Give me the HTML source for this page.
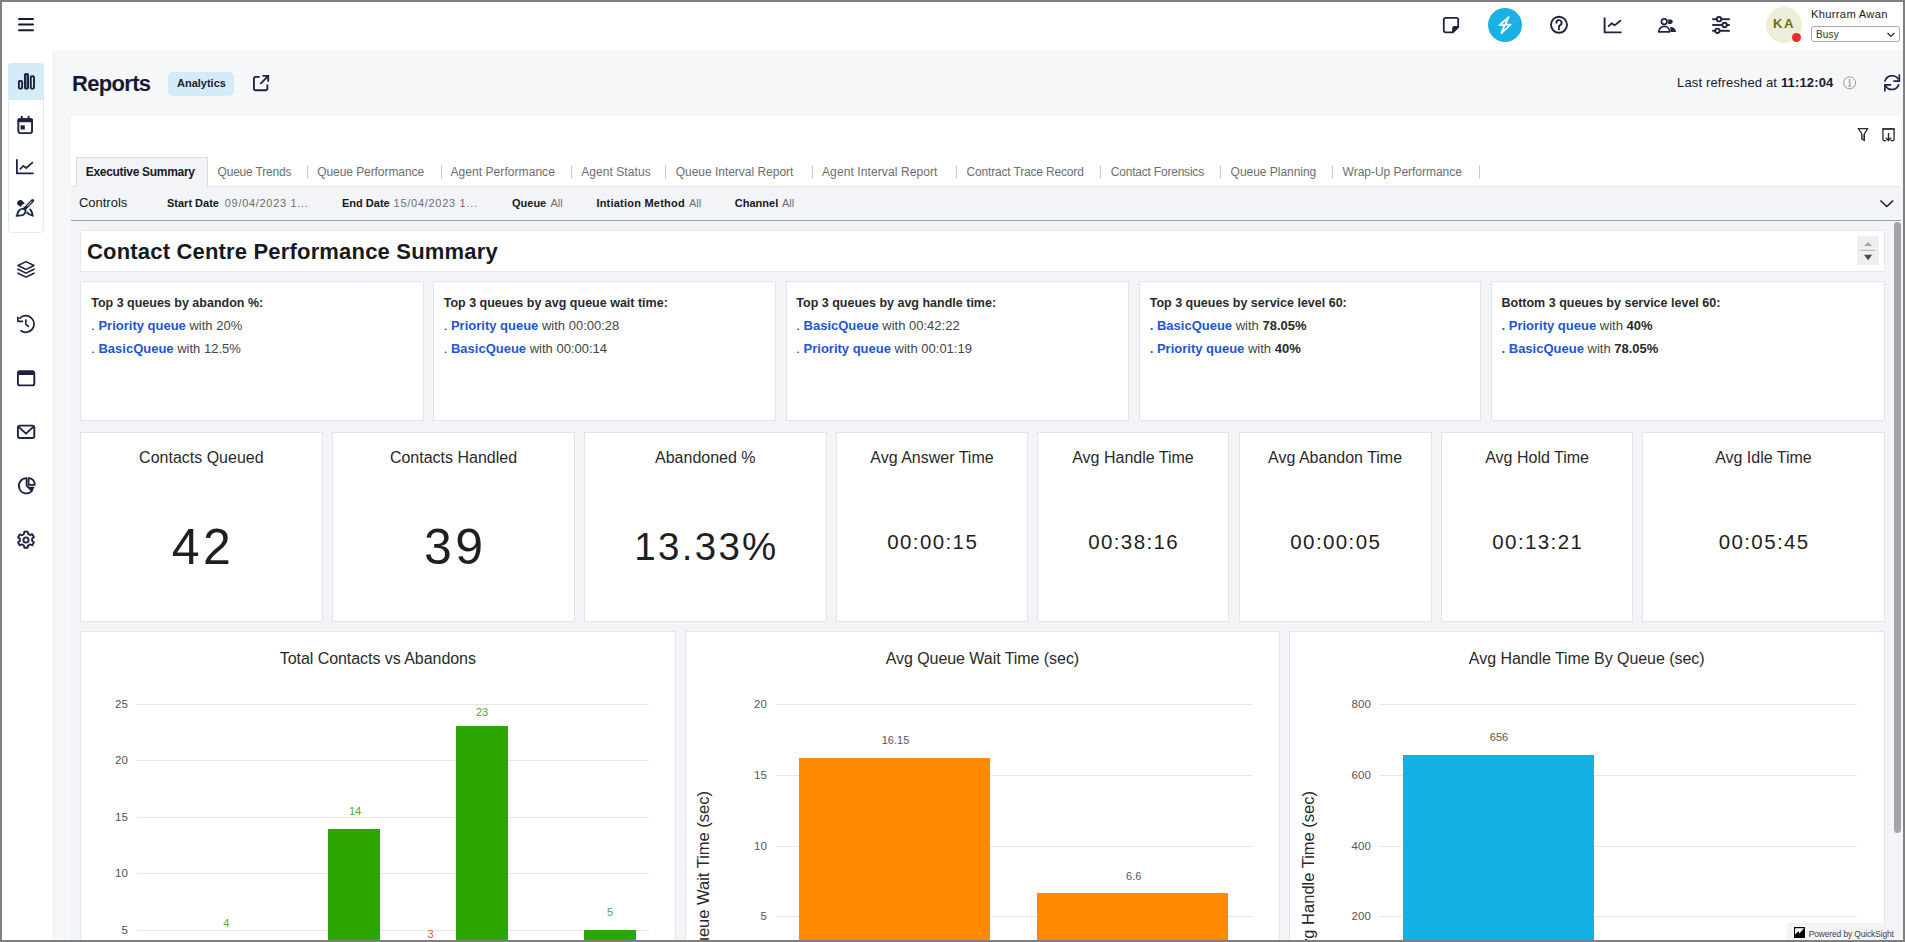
<!DOCTYPE html>
<html><head><meta charset="utf-8">
<style>
*{box-sizing:border-box;margin:0;padding:0}
html,body{width:1905px;height:942px;overflow:hidden;background:#7f7f7f;font-family:"Liberation Sans",sans-serif}
.a{position:absolute}
.t{position:absolute;white-space:nowrap;line-height:1}
svg{position:absolute;overflow:visible}
#app{position:absolute;left:2px;top:2px;width:1901px;height:938.5px;background:#fff;overflow:hidden}
</style></head><body>
<div id="app"></div>
<!-- main bg -->
<div class="a" style="left:53px;top:50px;width:1850px;height:890.5px;background:#f6f7f9"></div>
<!-- sidebar shadow line -->
<div class="a" style="left:53px;top:50px;width:1px;height:890.5px;background:#f0f1f3"></div>


<!-- SIDEBAR -->
<div class="a" style="left:8px;top:63px;width:36px;height:170px;border:1px solid #d9edf5;border-radius:4px;background:#fff"></div>
<div class="a" style="left:8px;top:63px;width:36px;height:36.5px;border-radius:4px 4px 0 0;background:#d3ecf8"></div>
<svg style="left:15px;top:70px" width="22" height="22" viewBox="0 0 22 22"><g fill="none" stroke="#1b2340" stroke-width="1.9"><rect x="3.9" y="11" width="3.2" height="7.6" rx="1"/><rect x="9.9" y="4" width="3.2" height="14.6" rx="1" fill="#6b7597"/><rect x="15.8" y="6.3" width="3.2" height="12.3" rx="1"/></g></svg>
<svg style="left:14px;top:113px" width="22" height="22" viewBox="0 0 22 22"><rect x="4.35" y="6.2" width="13.7" height="13.9" rx="2" fill="none" stroke="#1b2340" stroke-width="1.9"/><rect x="3.4" y="5.3" width="15.6" height="3.9" rx="1.5" fill="#1b2340"/><line x1="7.8" y1="2.9" x2="7.8" y2="6.2" stroke="#1b2340" stroke-width="1.9"/><line x1="14.6" y1="2.9" x2="14.6" y2="6.2" stroke="#1b2340" stroke-width="1.9"/><rect x="6.6" y="12.3" width="4.2" height="4.2" fill="#1b2340"/></svg>
<svg style="left:14px;top:156px" width="22" height="22" viewBox="0 0 22 22"><path d="M2.9 3.2V17.4H19.6" fill="none" stroke="#1b2340" stroke-width="1.8" stroke-linejoin="round"/><path d="M6.2 13l3.2-3.2 2.8 2.2 6.2-5.4" fill="none" stroke="#1b2340" stroke-width="1.7" stroke-linecap="round" stroke-linejoin="round"/></svg>
<svg style="left:14px;top:197px" width="22" height="22" viewBox="0 0 22 22"><path d="M3 6.4a3.3 3.3 0 0 1 5.8-2.2l2 2.2-2.6 1.3-1.7 2.3-1.2-1.2A3.2 3.2 0 0 1 3 6.4z" fill="#1b2340"/><line x1="18.6" y1="3.6" x2="10.6" y2="11.8" stroke="#1b2340" stroke-width="3.2" stroke-linecap="round"/><line x1="17.9" y1="4.4" x2="13.2" y2="9.2" stroke="#fff" stroke-width="1"/><path d="M11.2 12.2c1.2 2.6-.4 5.8-4 6.2L2.6 18.8c1-1.2.8-3 1.8-4.4 1.4-2 4.4-3.4 6.8-2.2z" fill="none" stroke="#1b2340" stroke-width="1.9" stroke-linejoin="round"/><path d="M13.2 15.6c1.6 1.6 3.6 2.6 5.4 3-.2-2.2-1-4.4-2.4-6.2" fill="none" stroke="#1b2340" stroke-width="1.9" stroke-linecap="round"/></svg>
<svg style="left:15px;top:258px" width="22" height="22" viewBox="0 0 22 22"><g fill="none" stroke="#1b2340" stroke-width="1.6" stroke-linejoin="round" stroke-linecap="round"><path d="M11 3.6l8 3.9-8 3.9-8-3.9z"/><path d="M3 11.2l8 3.9 8-3.9"/><path d="M3 15.2l8 3.9 8-3.9"/></g></svg>
<svg style="left:15px;top:313px" width="22" height="22" viewBox="0 0 22 22"><g fill="none" stroke="#1b2340" stroke-width="1.7" stroke-linejoin="round" stroke-linecap="round"><path d="M4.9 5.1A8.3 8.3 0 1 1 6 17.8"/><path d="M2.9 4.3V8.3H7.4"/><path d="M10.8 7v4.2l2.6 2.2"/></g></svg>
<svg style="left:15px;top:367px" width="22" height="22" viewBox="0 0 22 22"><rect x="2.9" y="4.4" width="16.4" height="14" rx="2" fill="none" stroke="#1b2340" stroke-width="1.9"/><rect x="2.9" y="3.6" width="16.4" height="4.4" rx="1.4" fill="#1b2340"/></svg>
<svg style="left:15px;top:420px" width="22" height="22" viewBox="0 0 22 22"><rect x="2.9" y="5.6" width="16.4" height="12.4" rx="2" fill="none" stroke="#1b2340" stroke-width="1.9"/><path d="M3.4 6.6L11 13.6l7.6-7" fill="none" stroke="#1b2340" stroke-width="1.9" stroke-linejoin="round"/></svg>
<svg style="left:15px;top:474px" width="22" height="22" viewBox="0 0 22 22"><g fill="none" stroke="#1b2340" stroke-width="1.8" stroke-linejoin="round"><path d="M11.6 4.2A7.6 7.6 0 1 0 17 17L11.6 11.6z"/><path d="M13.6 4.2v6.6h6.2a6.2 6.2 0 0 0-6.2-6.6z"/></g><path d="M13.4 12.8h6.4l-2.6 4.4z" fill="#1b2340"/></svg>
<svg style="left:15px;top:529px" width="22" height="22" viewBox="0 0 22 22"><g fill="none" stroke="#1b2340" stroke-width="1.9" stroke-linejoin="round"><path d="M9.4 2.6h3.2l.5 2.3 1.9 1.1 2.3-.8 1.6 2.8-1.8 1.6v2.2l1.8 1.6-1.6 2.8-2.3-.8-1.9 1.1-.5 2.3H9.4l-.5-2.3-1.9-1.1-2.3.8-1.6-2.8 1.8-1.6V9.8L3.1 8.2l1.6-2.8 2.3.8 1.9-1.1z"/><circle cx="11" cy="11" r="2.6"/></g></svg>


<!-- PAGE TITLE -->
<div class="t" style="left:72px;top:72.8px;font-size:22px;font-weight:700;color:#141a33;letter-spacing:-0.68px">Reports</div>
<div class="a" style="left:168px;top:72px;width:66px;height:24px;border-radius:5px;background:#d3ecf8"></div>
<div class="t" style="left:177px;top:77.5px;font-size:11px;font-weight:700;color:#1d2233;letter-spacing:0">Analytics</div>
<svg style="left:251px;top:73px" width="20.2" height="20.2" viewBox="0 0 22 22"><path d="M9.5 4.2H5.2a2 2 0 0 0-2 2v10.6a2 2 0 0 0 2 2h10.6a2 2 0 0 0 2-2v-4.4" fill="none" stroke="#1b2340" stroke-width="2"/><path d="M12.6 3.2h6.2v6.2M18.6 3.4l-8.4 8.4" fill="none" stroke="#1b2340" stroke-width="2"/></svg>
<div class="t" style="left:1677px;top:76px;font-size:13px;color:#141a33;letter-spacing:0.15px">Last refreshed at <b style="font-weight:700">11:12:04</b></div>
<svg style="left:1843px;top:76px" width="14" height="14" viewBox="0 0 14 14"><circle cx="6.6" cy="6.8" r="6" fill="none" stroke="#9a9a9a" stroke-width="1"/><circle cx="6.6" cy="3.9" r=".8" fill="#8a8a8a"/><path d="M5.6 5.8h1.3v4.2M5.4 10.2h2.6" fill="none" stroke="#8a8a8a" stroke-width="1"/></svg>
<svg style="left:1881px;top:72px" width="22" height="22" viewBox="0 0 22 22"><g fill="none" stroke="#1b2340" stroke-width="1.7"><path d="M3.8 9.6A7.4 7.4 0 0 1 17.4 7.4"/><path d="M12.4 9.1H18.3V2.6"/><path d="M17.9 12.2A7.4 7.4 0 0 1 4.4 13.8"/><path d="M10.1 12.9H3.9V19.4"/></g></svg>

<!-- QS PANEL -->
<div class="a" style="left:70.5px;top:116px;width:1830.5px;height:70px;background:#fff"></div>
<svg style="left:1856px;top:126px" width="14" height="16" viewBox="0 0 14 16"><path d="M6 8.6v5l2.4 1.4V8.6z" fill="#999"/><path d="M2.2 2.6h9.6L8.4 7.6v7L5.8 13V7.6z" fill="none" stroke="#2a2a2a" stroke-width="1.2" stroke-linejoin="round"/></svg>
<svg style="left:1880px;top:126px" width="18" height="18" viewBox="0 0 18 18"><rect x="2.3" y="2.1" width="12.4" height="1.7" fill="#222"/><path d="M2.9 3V13.2a1.4 1.4 0 0 0 1.4 1.4H6.4M14.1 3V13.2a1.4 1.4 0 0 1-1.4 1.4H10.6" fill="none" stroke="#2a2a2a" stroke-width="1.3"/><path d="M8.5 6.9V14.4M5.8 11.7l2.7 2.8 2.7-2.8" fill="none" stroke="#222" stroke-width="1.3"/></svg>
<div class="a" style="left:71px;top:186px;width:1830px;height:34px;background:#f3f4f8;border-top:1px solid #e3e4e8"></div>
<div class="a" style="left:76px;top:157px;width:132px;height:30px;background:#f3f4f7;border:1px solid #dcdde1;border-bottom:none"></div>
<div class="a" style="left:71px;top:220px;width:1830px;height:1px;background:#9aa0a8"></div>
<div class="a" style="left:71px;top:221px;width:1830px;height:720px;background:#f3f4f8"></div>


<!-- TABS -->
<div class="t" style="left:85.7px;top:165.5px;font-size:12px;font-weight:700;color:#16191f;letter-spacing:-0.3px">Executive Summary</div>
<div class="t tab" style="left:217.5px;top:165.5px;font-size:12px;color:#6b6e73;letter-spacing:-0.19px">Queue Trends</div>
<div class="a" style="left:306.7px;top:164.7px;width:1px;height:14px;background:#c9cbd0"></div>
<div class="t tab" style="left:317.2px;top:165.5px;font-size:12px;color:#6b6e73;letter-spacing:-0.07px">Queue Performance</div>
<div class="a" style="left:440.5px;top:164.7px;width:1px;height:14px;background:#c9cbd0"></div>
<div class="t tab" style="left:450.5px;top:165.5px;font-size:12px;color:#6b6e73;letter-spacing:0.06px">Agent Performance</div>
<div class="a" style="left:571.0px;top:164.7px;width:1px;height:14px;background:#c9cbd0"></div>
<div class="t tab" style="left:581.2px;top:165.5px;font-size:12px;color:#6b6e73;letter-spacing:0.07px">Agent Status</div>
<div class="a" style="left:665.0px;top:164.7px;width:1px;height:14px;background:#c9cbd0"></div>
<div class="t tab" style="left:675.7px;top:165.5px;font-size:12px;color:#6b6e73;letter-spacing:-0.02px">Queue Interval Report</div>
<div class="a" style="left:811.9px;top:164.7px;width:1px;height:14px;background:#c9cbd0"></div>
<div class="t tab" style="left:822px;top:165.5px;font-size:12px;color:#6b6e73;letter-spacing:0.1px">Agent Interval Report</div>
<div class="a" style="left:956.0px;top:164.7px;width:1px;height:14px;background:#c9cbd0"></div>
<div class="t tab" style="left:966.5px;top:165.5px;font-size:12px;color:#6b6e73;letter-spacing:-0.17px">Contract Trace Record</div>
<div class="a" style="left:1099.5px;top:164.7px;width:1px;height:14px;background:#c9cbd0"></div>
<div class="t tab" style="left:1110.8px;top:165.5px;font-size:12px;color:#6b6e73;letter-spacing:-0.21px">Contact Forensics</div>
<div class="a" style="left:1220.0px;top:164.7px;width:1px;height:14px;background:#c9cbd0"></div>
<div class="t tab" style="left:1230.6px;top:165.5px;font-size:12px;color:#6b6e73;letter-spacing:-0.03px">Queue Planning</div>
<div class="a" style="left:1332.0px;top:164.7px;width:1px;height:14px;background:#c9cbd0"></div>
<div class="t tab" style="left:1342.6px;top:165.5px;font-size:12px;color:#6b6e73;letter-spacing:-0.03px">Wrap-Up Performance</div>
<div class="a" style="left:1479.3px;top:164.7px;width:1px;height:14px;background:#c9cbd0"></div>

<!-- CONTROLS -->
<div class="t" style="left:78.9px;top:196px;font-size:13px;color:#16191f">Controls</div>
<div class="t" style="left:167px;top:197.5px;font-size:11px;font-weight:700;color:#16191f">Start Date</div>
<div class="t" style="left:224.8px;top:197.5px;font-size:11px;color:#6b6e73;letter-spacing:0.69px">09/04/2023 1...</div>
<div class="t" style="left:342px;top:197.5px;font-size:11px;font-weight:700;color:#16191f">End Date</div>
<div class="t" style="left:393.6px;top:197.5px;font-size:11px;color:#6b6e73;letter-spacing:0.72px">15/04/2023 1...</div>
<div class="t" style="left:512px;top:197.5px;font-size:11px;font-weight:700;color:#16191f">Queue</div>
<div class="t" style="left:550.5px;top:197.5px;font-size:11px;color:#6b6e73">All</div>
<div class="t" style="left:596.4px;top:197.5px;font-size:11px;font-weight:700;color:#16191f;letter-spacing:0.22px">Intiation Method</div>
<div class="t" style="left:689px;top:197.5px;font-size:11px;color:#6b6e73">All</div>
<div class="t" style="left:734.8px;top:197.5px;font-size:11px;font-weight:700;color:#16191f">Channel</div>
<div class="t" style="left:782px;top:197.5px;font-size:11px;color:#6b6e73">All</div>
<svg style="left:1878px;top:197px" width="18" height="12" viewBox="0 0 18 12"><path d="M2.4 3.4l6.4 6.2 6.4-6.2" fill="none" stroke="#16191f" stroke-width="1.4"/></svg>

<!-- SHEET TITLE -->
<div class="a" style="left:80px;top:230px;width:1805px;height:42px;background:#fff;border:1px solid #e6e7eb"></div>
<div class="t" style="left:87px;top:241.2px;font-size:22px;font-weight:700;color:#16191f;letter-spacing:0.18px">Contact Centre Performance Summary</div>
<div class="a" style="left:1857px;top:236px;width:22px;height:28.6px;background:#efefef"></div>
<svg style="left:1857px;top:236px" width="22" height="29" viewBox="0 0 22 29"><path d="M7 10h8.2L11.1 5.9z" fill="#a9a9a9"/><line x1="3" y1="14.4" x2="18.7" y2="14.4" stroke="#b5b5b5" stroke-width="1"/><path d="M7 18.7h8.2l-4.1 5.6z" fill="#4a4a4a"/></svg>


<!-- TOP3 CARDS -->
<div class="a" style="left:80px;top:281px;width:344px;height:140px;background:#fff;border:1px solid #e3e4e8"></div>
<div class="t" style="left:91.2px;top:296.8px;font-size:12.5px;font-weight:700;color:#2a2a2a">Top 3 queues by abandon %:</div>
<div class="t" style="left:91.2px;top:318.5px;font-size:13px"><span style="color:#16191f">.</span> <span style="color:#1f55d4;font-weight:700">Priority queue</span><span style="color:#444"> with 20%</span></div>
<div class="t" style="left:91.2px;top:342px;font-size:13px"><span style="color:#16191f">.</span> <span style="color:#1f55d4;font-weight:700">BasicQueue</span><span style="color:#444"> with 12.5%</span></div>
<div class="a" style="left:433px;top:281px;width:343px;height:140px;background:#fff;border:1px solid #e3e4e8"></div>
<div class="t" style="left:443.7px;top:296.8px;font-size:12.5px;font-weight:700;color:#2a2a2a">Top 3 queues by avg queue wait time:</div>
<div class="t" style="left:443.7px;top:318.5px;font-size:13px"><span style="color:#16191f">.</span> <span style="color:#1f55d4;font-weight:700">Priority queue</span><span style="color:#444"> with 00:00:28</span></div>
<div class="t" style="left:443.7px;top:342px;font-size:13px"><span style="color:#16191f">.</span> <span style="color:#1f55d4;font-weight:700">BasicQueue</span><span style="color:#444"> with 00:00:14</span></div>
<div class="a" style="left:786px;top:281px;width:343px;height:140px;background:#fff;border:1px solid #e3e4e8"></div>
<div class="t" style="left:796.3px;top:296.8px;font-size:12.5px;font-weight:700;color:#2a2a2a">Top 3 queues by avg handle time:</div>
<div class="t" style="left:796.3px;top:318.5px;font-size:13px"><span style="color:#16191f">.</span> <span style="color:#1f55d4;font-weight:700">BasicQueue</span><span style="color:#444"> with 00:42:22</span></div>
<div class="t" style="left:796.3px;top:342px;font-size:13px"><span style="color:#16191f">.</span> <span style="color:#1f55d4;font-weight:700">Priority queue</span><span style="color:#444"> with 00:01:19</span></div>
<div class="a" style="left:1139px;top:281px;width:342px;height:140px;background:#fff;border:1px solid #e3e4e8"></div>
<div class="t" style="left:1149.7px;top:296.8px;font-size:12.5px;font-weight:700;color:#2a2a2a">Top 3 queues by service level 60:</div>
<div class="t" style="left:1149.7px;top:318.5px;font-size:13px"><span style="color:#1f55d4;font-weight:700">.</span> <span style="color:#1f55d4;font-weight:700">BasicQueue</span><span style="color:#444"> with </span><span style="color:#2a2a2a;font-weight:700">78.05%</span></div>
<div class="t" style="left:1149.7px;top:342px;font-size:13px"><span style="color:#1f55d4;font-weight:700">.</span> <span style="color:#1f55d4;font-weight:700">Priority queue</span><span style="color:#444"> with </span><span style="color:#2a2a2a;font-weight:700">40%</span></div>
<div class="a" style="left:1491px;top:281px;width:394px;height:140px;background:#fff;border:1px solid #e3e4e8"></div>
<div class="t" style="left:1501.5px;top:296.8px;font-size:12.5px;font-weight:700;color:#2a2a2a">Bottom 3 queues by service level 60:</div>
<div class="t" style="left:1501.5px;top:318.5px;font-size:13px"><span style="color:#1f55d4;font-weight:700">.</span> <span style="color:#1f55d4;font-weight:700">Priority queue</span><span style="color:#444"> with </span><span style="color:#2a2a2a;font-weight:700">40%</span></div>
<div class="t" style="left:1501.5px;top:342px;font-size:13px"><span style="color:#1f55d4;font-weight:700">.</span> <span style="color:#1f55d4;font-weight:700">BasicQueue</span><span style="color:#444"> with </span><span style="color:#2a2a2a;font-weight:700">78.05%</span></div>

<!-- KPI CARDS -->
<div class="a" style="left:80px;top:432px;width:243px;height:190px;background:#fff;border:1px solid #e3e4e8"></div>
<div class="t" style="left:80.5px;width:241.7px;text-align:center;top:450.4px;font-size:16px;color:#2a2a2a">Contacts Queued</div>
<div class="t" style="left:80.5px;width:241.7px;text-align:center;top:522px;font-size:50px;color:#1f1f1f;letter-spacing:3.5px;text-indent:3.5px">42</div>
<div class="a" style="left:332px;top:432px;width:243px;height:190px;background:#fff;border:1px solid #e3e4e8"></div>
<div class="t" style="left:332px;width:243px;text-align:center;top:450.4px;font-size:16px;color:#2a2a2a">Contacts Handled</div>
<div class="t" style="left:332px;width:243px;text-align:center;top:522px;font-size:50px;color:#1f1f1f;letter-spacing:3.5px;text-indent:3.5px">39</div>
<div class="a" style="left:584px;top:432px;width:243px;height:190px;background:#fff;border:1px solid #e3e4e8"></div>
<div class="t" style="left:584.3px;width:242.0px;text-align:center;top:450.4px;font-size:16px;color:#2a2a2a">Abandoned %</div>
<div class="t" style="left:584.3px;width:242.0px;text-align:center;top:527.5px;font-size:38.5px;color:#1f1f1f;letter-spacing:2.3px;text-indent:2.3px">13.33%</div>
<div class="a" style="left:836px;top:432px;width:192px;height:190px;background:#fff;border:1px solid #e3e4e8"></div>
<div class="t" style="left:836.3px;width:191.4px;text-align:center;top:450.4px;font-size:16px;color:#2a2a2a">Avg Answer Time</div>
<div class="t" style="left:836.3px;width:191.4px;text-align:center;top:531.6px;font-size:20.5px;color:#1f1f1f;letter-spacing:1.4px;text-indent:1.4px">00:00:15</div>
<div class="a" style="left:1037px;top:432px;width:192px;height:190px;background:#fff;border:1px solid #e3e4e8"></div>
<div class="t" style="left:1037.4px;width:191.2px;text-align:center;top:450.4px;font-size:16px;color:#2a2a2a">Avg Handle Time</div>
<div class="t" style="left:1037.4px;width:191.2px;text-align:center;top:531.6px;font-size:20.5px;color:#1f1f1f;letter-spacing:1.4px;text-indent:1.4px">00:38:16</div>
<div class="a" style="left:1239px;top:432px;width:193px;height:190px;background:#fff;border:1px solid #e3e4e8"></div>
<div class="t" style="left:1238.7px;width:192.8px;text-align:center;top:450.4px;font-size:16px;color:#2a2a2a">Avg Abandon Time</div>
<div class="t" style="left:1238.7px;width:192.8px;text-align:center;top:531.6px;font-size:20.5px;color:#1f1f1f;letter-spacing:1.4px;text-indent:1.4px">00:00:05</div>
<div class="a" style="left:1441px;top:432px;width:192px;height:190px;background:#fff;border:1px solid #e3e4e8"></div>
<div class="t" style="left:1441.6px;width:191.0px;text-align:center;top:450.4px;font-size:16px;color:#2a2a2a">Avg Hold Time</div>
<div class="t" style="left:1441.6px;width:191.0px;text-align:center;top:531.6px;font-size:20.5px;color:#1f1f1f;letter-spacing:1.4px;text-indent:1.4px">00:13:21</div>
<div class="a" style="left:1642px;top:432px;width:243px;height:190px;background:#fff;border:1px solid #e3e4e8"></div>
<div class="t" style="left:1642.3px;width:242.3px;text-align:center;top:450.4px;font-size:16px;color:#2a2a2a">Avg Idle Time</div>
<div class="t" style="left:1642.3px;width:242.3px;text-align:center;top:531.6px;font-size:20.5px;color:#1f1f1f;letter-spacing:1.4px;text-indent:1.4px">00:05:45</div>


<!-- CHARTS -->
<div class="a" style="left:80px;top:631px;width:596px;height:330px;background:#fff;border:1px solid #e3e4e8"></div>
<div class="a" style="left:685px;top:631px;width:595px;height:330px;background:#fff;border:1px solid #e3e4e8"></div>
<div class="a" style="left:1289px;top:631px;width:596px;height:330px;background:#fff;border:1px solid #e3e4e8"></div>
<div class="t" style="left:177.8px;width:400px;text-align:center;top:651px;font-size:16px;color:#2a2a2a;letter-spacing:-0.05px">Total Contacts vs Abandons</div>
<div class="t" style="left:782.4px;width:400px;text-align:center;top:651px;font-size:16px;color:#2a2a2a;letter-spacing:-0.05px">Avg Queue Wait Time (sec)</div>
<div class="t" style="left:1386.7px;width:400px;text-align:center;top:651px;font-size:16px;color:#2a2a2a;letter-spacing:-0.05px">Avg Handle Time By Queue (sec)</div>
<div class="a" style="left:137.2px;top:704.2px;width:511.5px;height:1px;background:#e6e6e6"></div>
<div class="t" style="left:67.8px;width:60px;text-align:right;top:699.3px;font-size:11.5px;color:#555">25</div>
<div class="a" style="left:137.2px;top:760.1px;width:511.5px;height:1px;background:#e6e6e6"></div>
<div class="t" style="left:67.8px;width:60px;text-align:right;top:755.2px;font-size:11.5px;color:#555">20</div>
<div class="a" style="left:137.2px;top:816.5px;width:511.5px;height:1px;background:#e6e6e6"></div>
<div class="t" style="left:67.8px;width:60px;text-align:right;top:811.6px;font-size:11.5px;color:#555">15</div>
<div class="a" style="left:137.2px;top:872.8px;width:511.5px;height:1px;background:#e6e6e6"></div>
<div class="t" style="left:67.8px;width:60px;text-align:right;top:867.9px;font-size:11.5px;color:#555">10</div>
<div class="a" style="left:137.2px;top:929.7px;width:511.5px;height:1px;background:#e6e6e6"></div>
<div class="t" style="left:67.8px;width:60px;text-align:right;top:924.8px;font-size:11.5px;color:#555">5</div>
<div class="a" style="left:328.4px;top:828.6px;width:51.6px;height:131.4px;background:#2ca600"></div>
<div class="a" style="left:456.2px;top:726px;width:51.6px;height:234.0px;background:#2ca600"></div>
<div class="a" style="left:584px;top:929.5px;width:51.6px;height:30.5px;background:#2ca600"></div>
<div class="t" style="left:196.4px;width:60px;text-align:center;top:918.2px;font-size:11px;color:#4fa83a">4</div>
<div class="t" style="left:325.0px;width:60px;text-align:center;top:805.5px;font-size:11px;color:#4fa83a">14</div>
<div class="t" style="left:452.0px;width:60px;text-align:center;top:706.6px;font-size:11px;color:#4fa83a">23</div>
<div class="t" style="left:580.0px;width:60px;text-align:center;top:906.5px;font-size:11px;color:#4fa83a">5</div>
<div class="t" style="left:400.6px;width:60px;text-align:center;top:929.4px;font-size:11px;color:#e5572b">3</div>
<div class="a" style="left:775.9px;top:704.2px;width:476.1px;height:1px;background:#e6e6e6"></div>
<div class="t" style="left:706.8px;width:60px;text-align:right;top:699.3px;font-size:11.5px;color:#555">20</div>
<div class="a" style="left:775.9px;top:774.9px;width:476.1px;height:1px;background:#e6e6e6"></div>
<div class="t" style="left:706.8px;width:60px;text-align:right;top:770.0px;font-size:11.5px;color:#555">15</div>
<div class="a" style="left:775.9px;top:845.5px;width:476.1px;height:1px;background:#e6e6e6"></div>
<div class="t" style="left:706.8px;width:60px;text-align:right;top:840.6px;font-size:11.5px;color:#555">10</div>
<div class="a" style="left:775.9px;top:915.9px;width:476.1px;height:1px;background:#e6e6e6"></div>
<div class="t" style="left:706.8px;width:60px;text-align:right;top:911.0px;font-size:11.5px;color:#555">5</div>
<div class="a" style="left:798.8px;top:757.9px;width:191.4px;height:202.1px;background:#ff8a00"></div>
<div class="a" style="left:1037.3px;top:893.2px;width:191.2px;height:66.8px;background:#ff8a00"></div>
<div class="t" style="left:865.5px;width:60px;text-align:center;top:735.2px;font-size:11px;color:#555">16.15</div>
<div class="t" style="left:1103.7px;width:60px;text-align:center;top:870.5px;font-size:11px;color:#555">6.6</div>
<div class="t" style="left:703.2px;top:790.5px;font-size:16.5px;color:#2a2a2a;transform-origin:0 0;transform:rotate(-90deg) translate(-100%,-50%)"><span>Avg Queue Wait Time (sec)</span></div>
<div class="a" style="left:1380.3px;top:704.2px;width:476.9px;height:1px;background:#e6e6e6"></div>
<div class="t" style="left:1310.8px;width:60px;text-align:right;top:699.3px;font-size:11.5px;color:#555">800</div>
<div class="a" style="left:1380.3px;top:774.9px;width:476.9px;height:1px;background:#e6e6e6"></div>
<div class="t" style="left:1310.8px;width:60px;text-align:right;top:770.0px;font-size:11.5px;color:#555">600</div>
<div class="a" style="left:1380.3px;top:845.5px;width:476.9px;height:1px;background:#e6e6e6"></div>
<div class="t" style="left:1310.8px;width:60px;text-align:right;top:840.6px;font-size:11.5px;color:#555">400</div>
<div class="a" style="left:1380.3px;top:915.9px;width:476.9px;height:1px;background:#e6e6e6"></div>
<div class="t" style="left:1310.8px;width:60px;text-align:right;top:911.0px;font-size:11.5px;color:#555">200</div>
<div class="a" style="left:1402.8px;top:754.6px;width:191.2px;height:210px;background:#13b0e3"></div>
<div class="t" style="left:1469.0px;width:60px;text-align:center;top:731.8px;font-size:11px;color:#555">656</div>
<div class="t" style="left:1709.0px;width:60px;text-align:center;top:940.8px;font-size:11px;color:#555">38</div>
<div class="t" style="left:1307.5px;top:791.2px;font-size:16.5px;color:#2a2a2a;transform-origin:0 0;transform:rotate(-90deg) translate(-100%,-50%)"><span>Avg Handle Time (sec)</span></div>
<div class="a" style="left:1787px;top:923px;width:114px;height:20px;background:#f4f4f4"></div>
<div class="a" style="left:1793px;top:926px;width:13px;height:13px;background:#fff"></div><svg style="left:1794px;top:927px" width="11" height="11" viewBox="0 0 11 11"><rect width="11" height="11" fill="#000"/><path d="M1.1 1.2H10L5.4 6.5 4.6 4.1 1.1 7.5z" fill="#fff"/></svg>
<div class="t" style="left:1808.8px;top:929.5px;font-size:8.4px;color:#3a3f4f;letter-spacing:-0.1px">Powered by QuickSight</div>
<div class="a" style="left:1894px;top:221.5px;width:7px;height:611px;border-radius:3.5px;background:#a3a4a7"></div>

<!-- HEADER -->
<svg style="left:0;top:0" width="60" height="50"><g stroke="#141a33" stroke-width="2" stroke-linecap="round"><line x1="19" y1="19" x2="33" y2="19"/><line x1="19" y1="24.6" x2="33" y2="24.6"/><line x1="19" y1="30.2" x2="33" y2="30.2"/></g></svg>

<!-- header right icons -->
<svg style="left:1440px;top:14px" width="22" height="22" viewBox="0 0 22 22"><path d="M5.5 3.8h11a1.7 1.7 0 0 1 1.7 1.7v7.5l-5.3 5.3h-7.4a1.7 1.7 0 0 1-1.7-1.7V5.5a1.7 1.7 0 0 1 1.7-1.7z" fill="none" stroke="#1b2340" stroke-width="1.8" stroke-linejoin="round"/><path d="M18.2 13h-3.6a1.6 1.6 0 0 0-1.6 1.6v3.7" fill="none" stroke="#1b2340" stroke-width="1.8" stroke-linejoin="round"/><path d="M13.4 17.6l4.2-4.2h-3a1.2 1.2 0 0 0-1.2 1.2z" fill="#1b2340"/></svg>
<div class="a" style="left:1488px;top:8px;width:34px;height:34px;border-radius:50%;background:#1ab1e6"></div>
<svg style="left:1496px;top:16px" width="18" height="18" viewBox="0 0 18 18"><path d="M12.6 1.2L3.4 9.2H8.6L5.4 17.2 14.6 8.6H9.4z" fill="none" stroke="#fff" stroke-width="1.8" stroke-linejoin="round"/></svg>
<svg style="left:1548px;top:14px" width="22" height="22" viewBox="0 0 22 22"><circle cx="11" cy="10.8" r="8" fill="none" stroke="#1b2340" stroke-width="1.9"/><path d="M8.4 8.7a2.6 2.6 0 1 1 3.7 2.4c-.7.3-1.1.8-1.1 1.5v.6" fill="none" stroke="#1b2340" stroke-width="1.9" stroke-linecap="round"/><circle cx="11" cy="15.2" r="1.1" fill="#1b2340"/></svg>
<svg style="left:1602px;top:14px" width="22" height="22" viewBox="0 0 22 22"><path d="M2.6 3.4v15h17" fill="none" stroke="#1b2340" stroke-width="1.9" stroke-linejoin="round"/><path d="M6.6 12.2l3.2-3 2.8 2.2 5.8-4.6" fill="none" stroke="#1b2340" stroke-width="1.8" stroke-linecap="round" stroke-linejoin="round"/></svg>
<svg style="left:1656px;top:14px" width="22" height="22" viewBox="0 0 22 22"><path d="M12.2 5.6H14.6a2.15 2.15 0 0 1 0 4.3H12.2z" fill="#1b2340"/><path d="M14.4 13c3.2 0 5.6 2.1 5.6 5H14.4z" fill="#1b2340"/><circle cx="8.2" cy="7.6" r="2.8" fill="#fff" stroke="#1b2340" stroke-width="1.7"/><path d="M2.8 17.8c0-3.2 2.4-5.4 5.4-5.4s5.4 2.2 5.4 5.4z" fill="#fff" stroke="#1b2340" stroke-width="1.7" stroke-linejoin="round"/></svg>
<svg style="left:1710px;top:14px" width="22" height="22" viewBox="0 0 22 22"><g fill="none" stroke="#1b2340" stroke-width="1.9"><line x1="2.2" y1="5.2" x2="19.8" y2="5.2"/><line x1="2.2" y1="11" x2="19.8" y2="11"/><line x1="2.2" y1="16.8" x2="19.8" y2="16.8"/><circle cx="9" cy="5.2" r="2.2" fill="#fff"/><circle cx="14.6" cy="11" r="2.2" fill="#fff"/><circle cx="7.4" cy="16.8" r="2.2" fill="#fff"/></g></svg>
<div class="a" style="left:1766px;top:7px;width:36px;height:36px;border-radius:50%;background:#edeeda"></div>
<div class="t" style="left:1773px;top:17.2px;font-size:13.2px;font-weight:700;color:#6e6a1e;letter-spacing:1.4px">KA</div>
<div class="a" style="left:1792px;top:32.8px;width:9.2px;height:9.2px;border-radius:50%;background:#e82c2c"></div>
<div class="t" style="left:1811px;top:8.5px;font-size:11.2px;color:#222;font-weight:500;letter-spacing:0.3px">Khurram Awan</div>
<div class="a" style="left:1811px;top:26px;width:89px;height:15.5px;border:1px solid #aaa;border-radius:3px;background:#fff"></div>
<div class="t" style="left:1816px;top:30px;font-size:10px;color:#333;letter-spacing:0.15px">Busy</div>
<svg style="left:1886px;top:31px" width="10" height="8" viewBox="0 0 10 8"><path d="M1.5 2l3.4 3.4L8.3 2" fill="none" stroke="#1b2340" stroke-width="1.2"/></svg>

<div class="a" style="left:0;top:940px;width:1905px;height:2px;background:#7f7f7f"></div>
<div class="a" style="left:1903px;top:0;width:2px;height:942px;background:#7f7f7f"></div>
</body></html>
